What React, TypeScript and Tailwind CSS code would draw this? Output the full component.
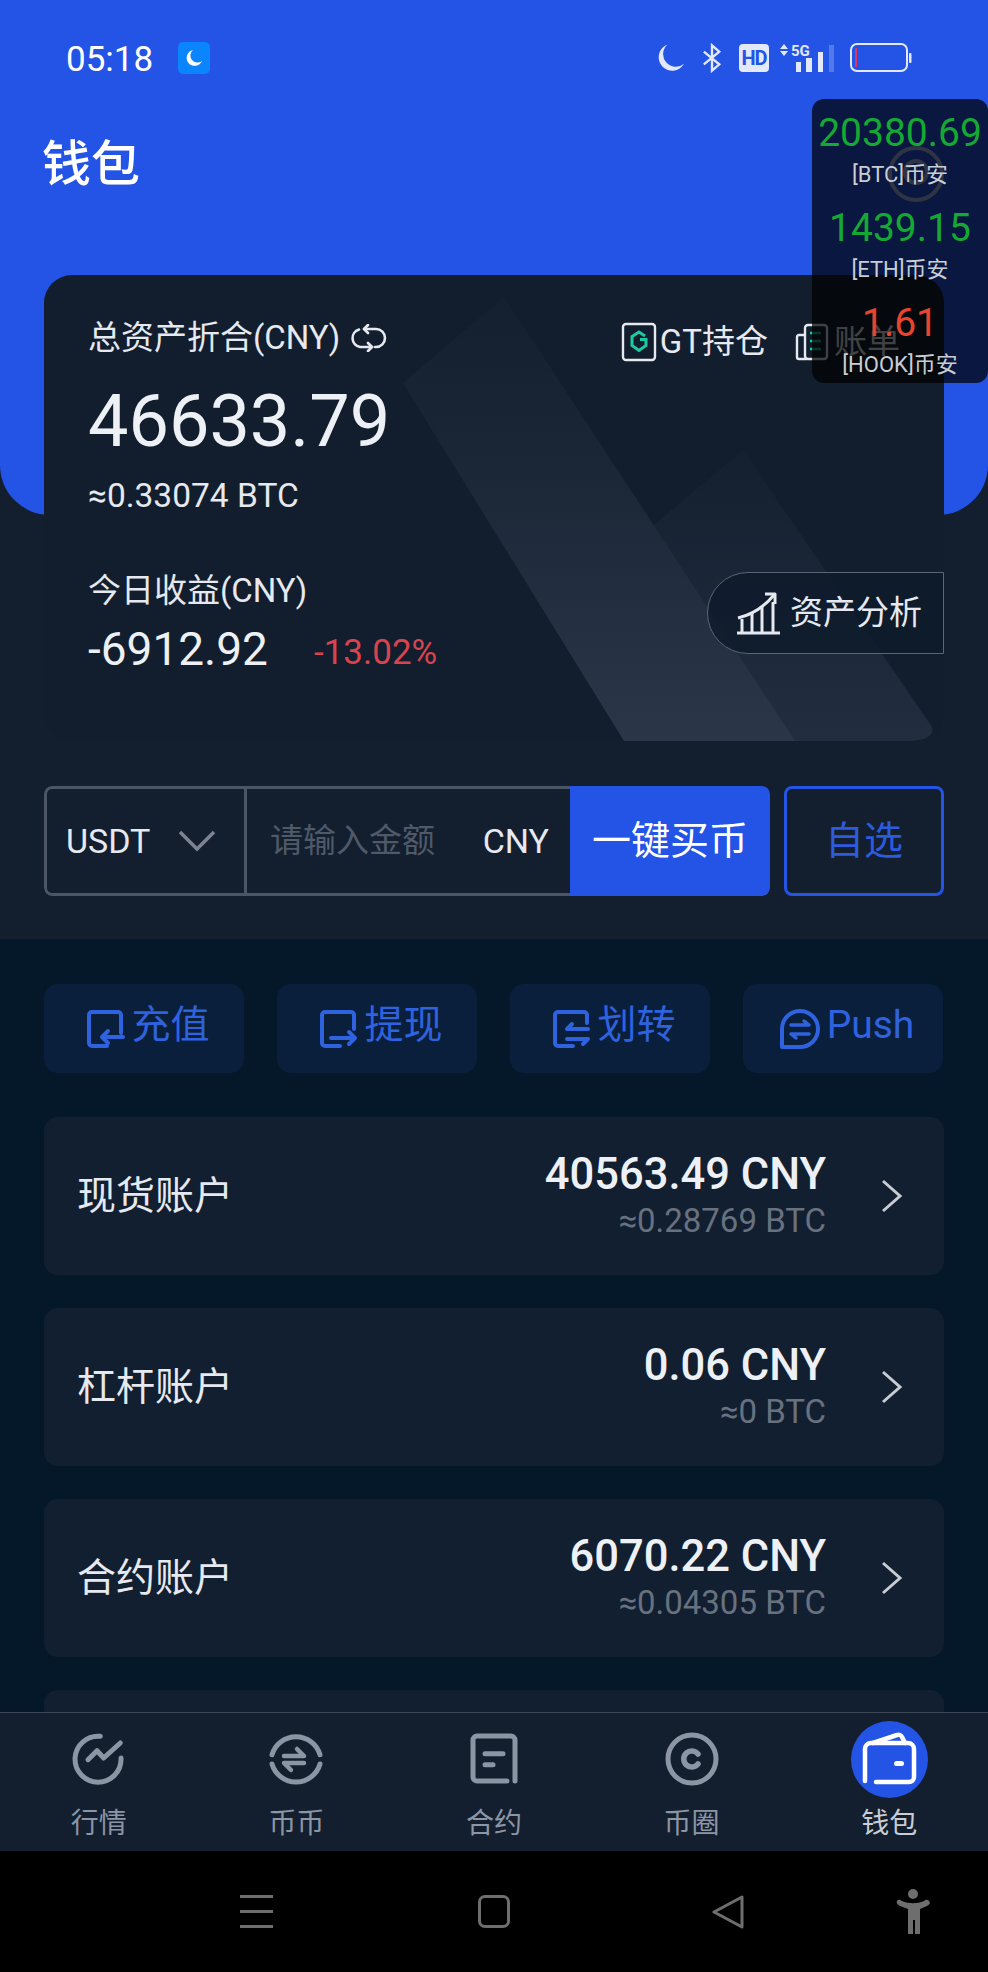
import React from "react";

const CJK = "font-['Roboto','Noto_Sans_CJK_SC',sans-serif]";

function StatusBar() {
  return (
    <div className="flex items-center h-[32px] pl-[66px] pr-[76px] mt-[42px]">
      <span className="text-[35px] leading-[32px] text-white translate-y-[2px]">05:18</span>
      <span className="ml-[25px] w-[32px] h-[32px] rounded-[5px] bg-[#0a84ff] flex items-center justify-center">
        <svg width="20" height="20" viewBox="0 0 20 20"><path d="M9 2a8 8 0 1 0 9 11 7 7 0 0 1-9-11z" fill="#fff" /></svg>
      </span>
      <div className="ml-auto flex items-center">
        <svg width="29" height="30" viewBox="0 0 30 30"><path d="M12 1a14 14 0 1 0 17 20 13 13 0 0 1-17-20z" fill="#e3e8fb" /></svg>
        <svg className="ml-[17px]" width="20" height="32" viewBox="0 0 22 32" fill="none" stroke="#e3e8fb" strokeWidth="2.6"><path d="M2 9l17 14-8 7V2l8 7L2 23" /></svg>
        <span className="ml-[17px] w-[30px] h-[28px] rounded-[4px] bg-[#e3e8fb] flex items-center justify-center text-[#2454e6] text-[20px] leading-none font-bold tracking-[-1px]">HD</span>
        <svg className="ml-[11px]" width="55" height="30" viewBox="0 0 55 30">
          <path d="M4 1l4 5H0zM4 13l4-5H0z" fill="#e3e8fb" />
          <text x="11" y="13" fontSize="15" fontWeight="700" fill="#e3e8fb" fontFamily="Roboto, sans-serif">5G</text>
          <rect x="16" y="19" width="5" height="10" fill="#e3e8fb" />
          <rect x="26" y="15" width="6" height="14" fill="#e3e8fb" />
          <rect x="38" y="9" width="5" height="20" fill="#e3e8fb" />
          <rect x="49" y="2" width="5" height="27" fill="#e3e8fb" fillOpacity="0.25" />
        </svg>
        <svg className="ml-[15px]" width="62" height="30" viewBox="0 0 62 30" fill="none">
          <rect x="1" y="1" width="56" height="27" rx="6" stroke="#e3e8fb" strokeWidth="2" />
          <rect x="5" y="5" width="2" height="19" fill="#e0355f" />
          <rect x="59" y="10" width="2.5" height="10" rx="1" fill="#e3e8fb" />
        </svg>
      </div>
    </div>
  );
}

function Header() {
  return (
    <div className="h-[515px] bg-[#2454e6] rounded-b-[50px] flex flex-col">
      <StatusBar />
      <div className="flex items-start justify-between pl-[42px] pr-[43px] mt-[61px]">
        <h1 className="text-[49px] leading-[60px] font-medium text-white">钱包</h1>
        <svg width="58" height="58" viewBox="0 0 58 58" fill="none" stroke="#fff" strokeWidth="4" className="mt-[10px] opacity-60">
          <circle cx="29" cy="29" r="26" />
          <circle cx="29" cy="27" r="11" />
        </svg>
      </div>
    </div>
  );
}

function CardBands() {
  return (
    <svg className="absolute inset-0" width="900" height="466" viewBox="0 0 900 466">
      <defs>
        <linearGradient id="bandA" x1="0" y1="0" x2="0" y2="1">
          <stop offset="0" stopColor="#141f30" />
          <stop offset="0.35" stopColor="#1a2636" />
          <stop offset="1" stopColor="#2b3748" />
        </linearGradient>
        <linearGradient id="bandB" x1="0" y1="0" x2="0" y2="1">
          <stop offset="0" stopColor="#141f30" />
          <stop offset="1" stopColor="#222e3f" />
        </linearGradient>
      </defs>
      <path d="M699 175 L560 292 L650 466 L860 466 Q892 466 888 452 Z" fill="url(#bandB)" />
      <path d="M460 22 L359 108 L580 466 L751 466 Z" fill="url(#bandA)" />
    </svg>
  );
}

function AssetCard() {
  return (
    <div className="relative mx-[44px] mt-[-240px] h-[466px] rounded-[28px] bg-[#121e2e] overflow-hidden">
      <CardBands />
      <div className="relative h-full">
        <div className="flex items-center absolute left-[44px] top-[43px]">
          <span className="text-[33px] leading-[40px] text-[#e6e9ef]">总资产折合(CNY)</span>
          <svg className="ml-[10px]" width="37" height="28" viewBox="0 0 37 28" fill="none" stroke="#e6e9ef" strokeWidth="2.6" strokeLinecap="round" strokeLinejoin="round">
            <path d="M14 5h12a9 9 0 0 1 0 18h-1" />
            <path d="M18 1l-4 4 4 4" />
            <path d="M9 5.500a9 9 0 0 0 1 17.500h12" />
            <path d="M18 19l4 4-4 4" />
          </svg>
        </div>
        <div className="absolute left-[44px] top-[115px] text-[72px] leading-[64px] text-[#edf0f5]">46633.79</div>
        <div className="absolute left-[44px] top-[201px] text-[33.5px] leading-[40px] text-[#e6e9ef]">≈0.33074 BTC</div>
        <div className="absolute left-[44px] top-[296px] text-[33px] leading-[40px] text-[#e6e9ef]">今日收益(CNY)</div>
        <div className="absolute left-[44px] top-[348px] text-[46px] leading-[52px] text-[#edf0f5]">-6912.92</div>
        <div className="absolute left-[270px] top-[358px] text-[35px] leading-[40px] text-[#d9434e]">-13.02%</div>

        <div className="absolute right-[44px] top-[47px] flex items-center">
          <svg width="36" height="40" viewBox="0 0 36 40" fill="none">
            <rect x="2" y="2" width="32" height="36" rx="3" stroke="#e6e9ef" strokeWidth="2.4" />
            <path d="M24 14l-6-4-7 4.500v9l7 5 7-5v-6h-6" stroke="#1fc9a0" strokeWidth="3" />
          </svg>
          <span className="ml-[3px] text-[33px] leading-[40px] text-[#e6e9ef]">GT持仓</span>
          <svg className="ml-[27px]" width="34" height="38" viewBox="0 0 34 38" fill="none">
            <rect x="10" y="2" width="22" height="34" rx="3" stroke="#e6e9ef" strokeWidth="2.400" />
            <path d="M10 12H4a2 2 0 0 0-2 2v20a2 2 0 0 0 2 2h8" stroke="#e6e9ef" strokeWidth="2.400" />
            <path d="M15 10h11M15 18h11M15 26h11" stroke="#1fc9a0" strokeWidth="2.400" />
          </svg>
          <span className="ml-[5px] text-[33px] leading-[40px] text-[#e6e9ef]">账单</span>
        </div>

        <div className="absolute right-0 top-[297px] w-[237px] h-[82px] rounded-l-[41px] border border-[#5a6676] bg-[#0e1a2acc] flex items-center pl-[29px]">
          <svg width="44" height="43" viewBox="0 0 44 43" fill="none" stroke="#e6e9ef" strokeLinejoin="round">
            <path d="M0 41h43" strokeWidth="3" />
            <path d="M5 41V27M15 41V21M25 41V15M36 41V10" strokeWidth="3" />
            <path d="M1 26Q22 21 37 3" strokeWidth="3" />
            <path d="M28 2h10v10" strokeWidth="3" />
          </svg>
          <span className="ml-[9px] text-[33px] leading-[40px] text-[#e6e9ef]">资产分析</span>
        </div>
      </div>
    </div>
  );
}

function BuyRow() {
  return (
    <div className="flex mx-[44px] mt-[45px] h-[110px]">
      <div className="flex flex-1 rounded-[8px] overflow-hidden">
        <div className="w-[203px] h-full border-[3px] border-[#4b5566] rounded-l-[8px] flex items-center pl-[19px]">
          <span className="text-[34px] text-[#e6e9ef]">USDT</span>
          <svg className="ml-[28px]" width="38" height="22" viewBox="0 0 38 22" fill="none" stroke="#7d8490" strokeWidth="3.500"><path d="M2 2l17 17L36 2" /></svg>
        </div>
        <div className="flex-1 h-full border-y-[3px] border-[#4b5566] flex items-center pl-[23px] pr-[21px] justify-between">
          <span className="text-[33px] text-[#4f5968]">请输入金额</span>
          <span className="text-[34px] text-[#e6e9ef]">CNY</span>
        </div>
        <div className="w-[200px] h-full bg-[#2454e6] rounded-r-[8px] flex items-center justify-center text-[39px] text-white">一键买币</div>
      </div>
      <div className="ml-[14px] w-[160px] h-full rounded-[8px] border-[3px] border-[#2454e6] flex items-center justify-center text-[39px] text-[#2c5bdf]">自选</div>
    </div>
  );
}

const actionStroke = { fill: "none", stroke: "#2f62de", strokeWidth: 4, strokeLinecap: "round" as const, strokeLinejoin: "round" as const };

function ActionIcon({ kind }: { kind: string }) {
  if (kind === "push") {
    return (
      <svg width="42" height="42" viewBox="0 0 42 42" {...actionStroke}>
        <path d="M21 3a18 18 0 1 1 0 36H3V21A18 18 0 0 1 21 3z" />
        <path d="M12 17h18l-5-4M30 26H12l5 4" strokeWidth="3.500" />
      </svg>
    );
  }
  return (
    <svg width="40" height="40" viewBox="0 0 40 40" {...actionStroke}>
      {kind === "in" && <path d="M36 24V6a3 3 0 0 0-3-3H7a3 3 0 0 0-3 3v28a3 3 0 0 0 3 3h15" />}
      {kind === "in" && <path d="M38 28H17M23 22l-6 6 6 6" />}
      {kind === "out" && <path d="M36 20V6a3 3 0 0 0-3-3H7a3 3 0 0 0-3 3v28a3 3 0 0 0 3 3h15" />}
      {kind === "out" && <path d="M13 29h24M31 23l6 6-6 6" />}
      {kind === "swap" && <path d="M36 14V6a3 3 0 0 0-3-3H7a3 3 0 0 0-3 3v28a3 3 0 0 0 3 3h15" />}
      {kind === "swap" && <path d="M16 20h21M21 15l-5 5M37 30H16M32 35l5-5" />}
    </svg>
  );
}

function ActionButton({ kind, label }: { kind: string; label: string }) {
  return (
    <div className="w-[200px] h-[89px] rounded-[14px] bg-[#0a1f3b] flex items-center justify-center pl-[7px]">
      <div className="flex items-center">
        <ActionIcon kind={kind} />
        <span className="ml-[6px] text-[39px] leading-[44px] text-[#2f62de] -translate-y-[4px]">{label}</span>
      </div>
    </div>
  );
}

function AccountRow({ name, cny, btc }: { name: string; cny: string; btc: string }) {
  return (
    <div className="h-[158px] rounded-[14px] bg-[#121f30] flex items-center pl-[33px] pr-[40px] shrink-0">
      <span className="text-[39px] text-[#e6e9ef]">{name}</span>
      <div className="ml-auto flex flex-col items-end">
        <span className="text-[43.5px] leading-[46px] font-medium text-[#edf0f5]">{cny}</span>
        <span className="text-[33px] leading-[38px] mt-[4px] text-[#68717f]">{btc}</span>
      </div>
      <svg className="ml-[54px]" width="24" height="36" viewBox="0 0 24 36" fill="none" stroke="#c8ccd3" strokeWidth="3"><path d="M3 3l17 15L3 33" /></svg>
    </div>
  );
}

// The last account card is cut off by the tab bar, so it has no readable content.
function EmptyRow() {
  return <div className="h-[158px] rounded-[14px] bg-[#121f30] shrink-0" />;
}

function TabIcon({ name }: { name: string }) {
  const s = { fill: "none", stroke: "#8c95a3", strokeWidth: 5, strokeLinecap: "round" as const, strokeLinejoin: "round" as const };
  return (
    <svg width="56" height="56" viewBox="0 0 56 56" {...s}>
      {name === "market" && (
        <>
          <path d="M29.300 5.300A23 23 0 1 0 50 27" />
          <path d="M17 28.700L26 19.700L32.700 27L49.300 12" />
        </>
      )}
      {name === "spot" && (
        <>
          <path d="M4 23.700A25 25 0 0 1 52 23.700" />
          <path d="M4 33A25 25 0 0 0 52 33" />
          <path d="M16 25h20l-7-7M36 32H16l7 7" strokeWidth="4.500" />
        </>
      )}
      {name === "futures" && (
        <>
          <path d="M49 50V9a4 4 0 0 0-4-4H11a4 4 0 0 0-4 4v37a4 4 0 0 0 4 4h30" />
          <path d="M19 22.700h18" />
          <path d="M19 33.700h8" />
        </>
      )}
      {name === "circle" && (
        <>
          <circle cx="28" cy="28" r="24" />
          <path d="M34 23a8 8 0 1 0 0 10" strokeWidth="5.500" />
        </>
      )}
    </svg>
  );
}

function Tab({ icon, label, active }: { icon: string; label: string; active?: boolean }) {
  return (
    <div className="flex-1 flex flex-col items-center">
      <div className="h-[92px] flex items-center justify-center">
        {active ? (
          <div className="w-[77px] h-[77px] rounded-full bg-[#2454e6] flex items-center justify-center">
            <svg width="56" height="56" viewBox="0 0 56 56" fill="none" stroke="#fff" strokeWidth="4.500" strokeLinecap="round" strokeLinejoin="round">
              <path d="M4 50V18a6 6 0 0 1 6-6h37a6 6 0 0 1 6 6v28a5 5 0 0 1-5 5H15" />
              <path d="M12 12L36 4a4 4 0 0 1 5 2L44 12" />
              <rect x="33" y="30" width="10" height="5" rx="2.500" fill="#fff" stroke="none" />
            </svg>
          </div>
        ) : (
          <TabIcon name={icon} />
        )}
      </div>
      <span className={`text-[28px] leading-[32px] mt-[3px] ${active ? "text-[#c8ccd3]" : "text-[#8c95a3]"}`}>{label}</span>
    </div>
  );
}

function SystemNav() {
  return (
    <div className="h-[121px] bg-black flex items-center shrink-0">
      <div className="ml-[240px] flex flex-col justify-between w-[33px] h-[33px]">
        <div className="h-[3px] bg-[#6e6e6e]" />
        <div className="h-[3px] bg-[#6e6e6e]" />
        <div className="h-[3px] bg-[#6e6e6e]" />
      </div>
      <div className="ml-[205px] w-[32px] h-[33px] rounded-[7px] border-[3px] border-[#6e6e6e]" />
      <svg className="ml-[201px]" width="34" height="34" viewBox="0 0 34 34" fill="none" stroke="#6e6e6e" strokeWidth="3" strokeLinejoin="round"><path d="M31 2v30L3 17z" /></svg>
      <svg className="ml-[150px]" width="36" height="46" viewBox="0 0 36 46" fill="#6e6e6e">
        <circle cx="18" cy="5" r="5" />
        <path d="M2 12c2-2 3-1 5 0 7 3 15 3 22 0 2-1 3-2 5 0s0 4-2 5l-7 3v25h-5V31h-2v14h-5V20l-8-3c-2-1-4-3-3-5z" />
      </svg>
    </div>
  );
}

function PriceFloat() {
  const rows = [
    { price: "20380.69", pair: "[BTC]币安", tone: "text-[#15a834]" },
    { price: "1439.15", pair: "[ETH]币安", tone: "text-[#15a834]" },
    { price: "1.61", pair: "[HOOK]币安", tone: "text-[#e8452f]" },
  ];
  return (
    <div className="absolute left-[812px] top-[99px] w-[176px] h-[284px] rounded-[12px] bg-[#000000b8] flex flex-col items-center pt-[10px] z-10">
      {rows.map((r) => (
        <div key={r.price} className="h-[95px] shrink-0 flex flex-col items-center">
          <span className={`text-[39px] leading-[48px] ${r.tone}`}>{r.price}</span>
          <span className="text-[22px] leading-[28px] mt-[4px] text-[#c9cdd4]">{r.pair}</span>
        </div>
      ))}
    </div>
  );
}

export default function App() {
  return (
    <div className={`relative w-[988px] h-[1972px] overflow-hidden flex flex-col bg-[#04182a] ${CJK}`}>
      <div className="h-[939px] bg-[#131f2f] shrink-0">
        <Header />
        <AssetCard />
        <BuyRow />
      </div>
      <div className="flex-1 min-h-0 overflow-hidden px-[44px] pt-[45px]">
        <div className="flex gap-[33px]">
          <ActionButton kind="in" label="充值" />
          <ActionButton kind="out" label="提现" />
          <ActionButton kind="swap" label="划转" />
          <ActionButton kind="push" label="Push" />
        </div>
        <div className="flex flex-col gap-[33px] mt-[44px]">
          <AccountRow name="现货账户" cny="40563.49 CNY" btc="≈0.28769 BTC" />
          <AccountRow name="杠杆账户" cny="0.06 CNY" btc="≈0 BTC" />
          <AccountRow name="合约账户" cny="6070.22 CNY" btc="≈0.04305 BTC" />
          <EmptyRow />
        </div>
      </div>
      <div className="h-[139px] shrink-0 bg-[#131f2f] border-t border-[#3c4654] flex">
        <Tab icon="market" label="行情" />
        <Tab icon="spot" label="币币" />
        <Tab icon="futures" label="合约" />
        <Tab icon="circle" label="币圈" />
        <Tab icon="wallet" label="钱包" active />
      </div>
      <SystemNav />
      <PriceFloat />
    </div>
  );
}
